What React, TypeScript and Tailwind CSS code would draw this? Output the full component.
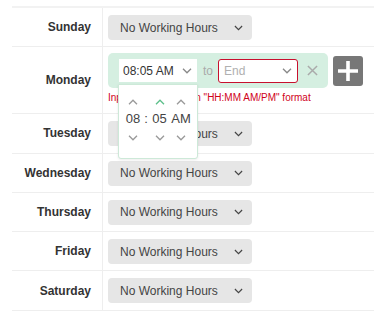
import React from 'react';

const DAYS = ['Sunday', 'Monday', 'Tuesday', 'Wednesday', 'Thursday', 'Friday', 'Saturday'];

function Chevron({ className, up = false }: { className?: string; up?: boolean }) {
  return (
    <svg viewBox="0 0 10 6" className={className} fill="none" stroke="currentColor" strokeWidth="1.3">
      {up ? <path d="M1 5.2 5 1.2 9 5.2" /> : <path d="M1 0.8 5 4.8 9 0.8" />}
    </svg>
  );
}

function NoHoursSelect() {
  return (
    <div className="flex h-[25px] w-[144px] items-center justify-between rounded-[4px] bg-[#e6e6e6] pl-[12px] pr-[9px] text-[12px] text-[#444]">
      <span>No Working Hours</span>
      <Chevron className="h-[6px] w-[9px] text-[#444]" />
    </div>
  );
}

function TimePopup() {
  return (
    <div className="absolute left-[-1px] top-[25px] z-10 h-[75px] w-[80px] rounded-b-[3px] border border-[#cde9d8] bg-white pl-[4px] shadow-[0_1px_3px_rgba(0,0,0,0.08)]">
      <div className="flex pt-[14px]">
        <div className="flex w-[20px] justify-center"><Chevron up className="h-[6px] w-[10px] text-[#999]" /></div>
        <div className="w-[6px]" />
        <div className="flex w-[21px] justify-center"><Chevron up className="h-[6px] w-[10px] text-[#5cbf8a]" /></div>
        <div className="flex w-[22px] justify-center"><Chevron up className="h-[6px] w-[10px] text-[#999]" /></div>
      </div>
      <div className="mt-[6px] flex text-[13px] leading-[16px] text-[#444]">
        <div className="w-[20px] text-center">08</div>
        <div className="w-[6px] text-center">:</div>
        <div className="w-[21px] text-center">05</div>
        <div className="w-[22px] text-center">AM</div>
      </div>
      <div className="mt-[8px] flex">
        <div className="flex w-[20px] justify-center"><Chevron className="h-[6px] w-[10px] text-[#999]" /></div>
        <div className="w-[6px]" />
        <div className="flex w-[21px] justify-center"><Chevron className="h-[6px] w-[10px] text-[#999]" /></div>
        <div className="flex w-[22px] justify-center"><Chevron className="h-[6px] w-[10px] text-[#999]" /></div>
      </div>
    </div>
  );
}

function MondayEditor() {
  return (
    <div className="flex flex-col">
      <div className="flex items-center">
        <div className="flex h-[35px] w-[220px] items-center rounded-[5px] bg-[#d5efe1] pl-[11px]">
          <div className="relative flex h-[23px] w-[78px] items-center justify-between bg-white pl-[4px] pr-[5px] text-[12px] text-[#333]">
            <span>08:05 AM</span>
            <Chevron className="h-[6px] w-[10px] text-[#888]" />
            <TimePopup />
          </div>
          <span className="ml-[6px] text-[12px] text-[#aaa]">to</span>
          <div className="ml-[5px] flex h-[24px] w-[80px] items-center justify-between rounded-[3px] border border-[#c8102e] bg-white pl-[5px] pr-[5px] text-[12px] text-[#b0b0b0]">
            <span>End</span>
            <Chevron className="h-[6px] w-[10px] text-[#888]" />
          </div>
          <svg viewBox="0 0 12 12" className="ml-[9px] h-[11px] w-[11px] text-[#aaa]" stroke="currentColor" strokeWidth="1.6">
            <path d="M1 1 11 11M11 1 1 11" />
          </svg>
        </div>
        <div className="ml-[5px] flex h-[30px] w-[30px] items-center justify-center rounded-[3px] bg-[#777]">
          <svg viewBox="0 0 20 20" className="h-[20px] w-[20px]" stroke="white" strokeWidth="3.6">
            <path d="M10 0v20M0 10h20" />
          </svg>
        </div>
      </div>
      <div className="mt-[3px] text-[10px] leading-[13px] text-[#d0021b]">
        Input time must be in "HH:MM AM/PM" format
      </div>
    </div>
  );
}

export default function App() {
  return (
    <div className="h-[314px] w-[374px] overflow-hidden bg-white pl-[12px] pt-[6px] font-['Liberation_Sans',Arial,sans-serif]">
      <div className="w-[420px] border-t-2 border-[#f2f2f2]">
        {DAYS.map((day) => (
          <div key={day} className="flex border-b border-[#eeeeee]">
            <div className="flex w-[91px] items-center justify-end border-r border-[#eeeeee] pr-[11px] text-[12px] font-bold text-[#333]">
              {day}
            </div>
            <div className={day === 'Monday' ? 'pl-[5px] pt-[6px] pb-[9px]' : 'pl-[5px] pt-[7px] pb-[6.3px]'}>
              {day === 'Monday' ? <MondayEditor /> : <NoHoursSelect />}
            </div>
          </div>
        ))}
      </div>
    </div>
  );
}
